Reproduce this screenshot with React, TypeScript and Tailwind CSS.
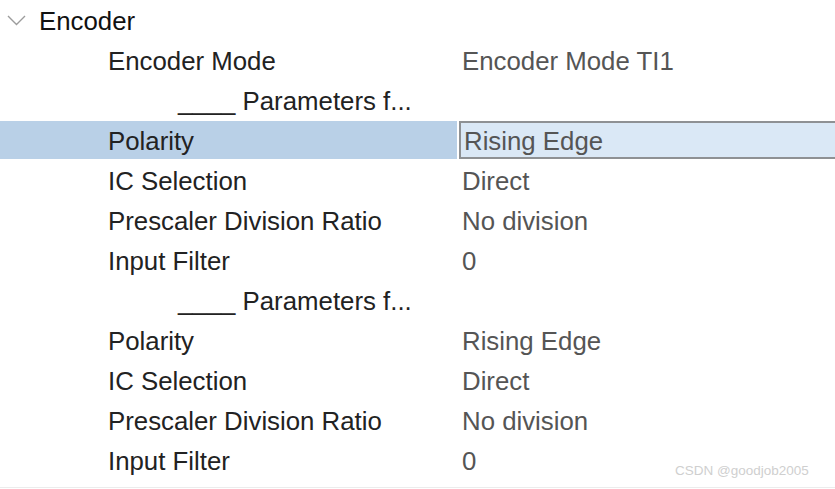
type Row = { label: string; value?: string; kind?: 'param' | 'header'; selected?: boolean }

const rows: Row[] = [
  { label: 'Encoder Mode', value: 'Encoder Mode TI1' },
  { label: '____ Parameters f...', kind: 'param' },
  { label: 'Polarity', value: 'Rising Edge', selected: true },
  { label: 'IC Selection', value: 'Direct' },
  { label: 'Prescaler Division Ratio', value: 'No division' },
  { label: 'Input Filter', value: '0' },
  { label: '____ Parameters f...', kind: 'param' },
  { label: 'Polarity', value: 'Rising Edge' },
  { label: 'IC Selection', value: 'Direct' },
  { label: 'Prescaler Division Ratio', value: 'No division' },
  { label: 'Input Filter', value: '0' },
]

export default function App() {
  return (
    <div
      className="relative w-[835px] h-[489px] bg-white overflow-hidden text-[25.8px] leading-none"
      style={{ fontFamily: '"Liberation Sans", Arial, sans-serif' }}
    >
      <div className="flex items-center h-[40px]">
        <svg width="26" height="40" viewBox="0 0 26 40" className="ml-[3px] shrink-0">
          <polyline points="5,16 13.5,24.5 22,16" fill="none" stroke="#9c9c9c" strokeWidth="1.4" />
        </svg>
        <span className="ml-[10px] pt-[3px] text-[#111]">Encoder</span>
      </div>

      {rows.map((row, i) =>
        row.kind === 'param' ? (
          <div key={i} className="flex items-center h-[40px] pt-[3px] pl-[178px] text-[#222]">
            {row.label}
          </div>
        ) : row.selected ? (
          <div key={i} className="flex h-[40px] py-[1px]">
            <div className="flex items-center w-[457px] shrink-0 bg-[#b9d0e7] pt-[3px] pl-[108px] text-[#222]">
              {row.label}
            </div>
            <div className="flex items-center w-[390px] shrink-0 ml-[2px] bg-[#dae8f6] border-2 border-[#8e9194] pt-[3px] pl-[3px] text-[#555]">
              {row.value}
            </div>
          </div>
        ) : (
          <div key={i} className="flex items-center h-[40px] pt-[3px]">
            <div className="w-[462px] shrink-0 pl-[108px] text-[#222]">{row.label}</div>
            <div className="text-[#555]">{row.value}</div>
          </div>
        )
      )}

      <div className="absolute left-0 right-0 top-[487px] h-[1px] bg-[#ececec]" />
      <div className="absolute left-[675px] top-[464px] text-[13.5px] text-[#cfcfcf]">
        CSDN @goodjob2005
      </div>
    </div>
  )
}
